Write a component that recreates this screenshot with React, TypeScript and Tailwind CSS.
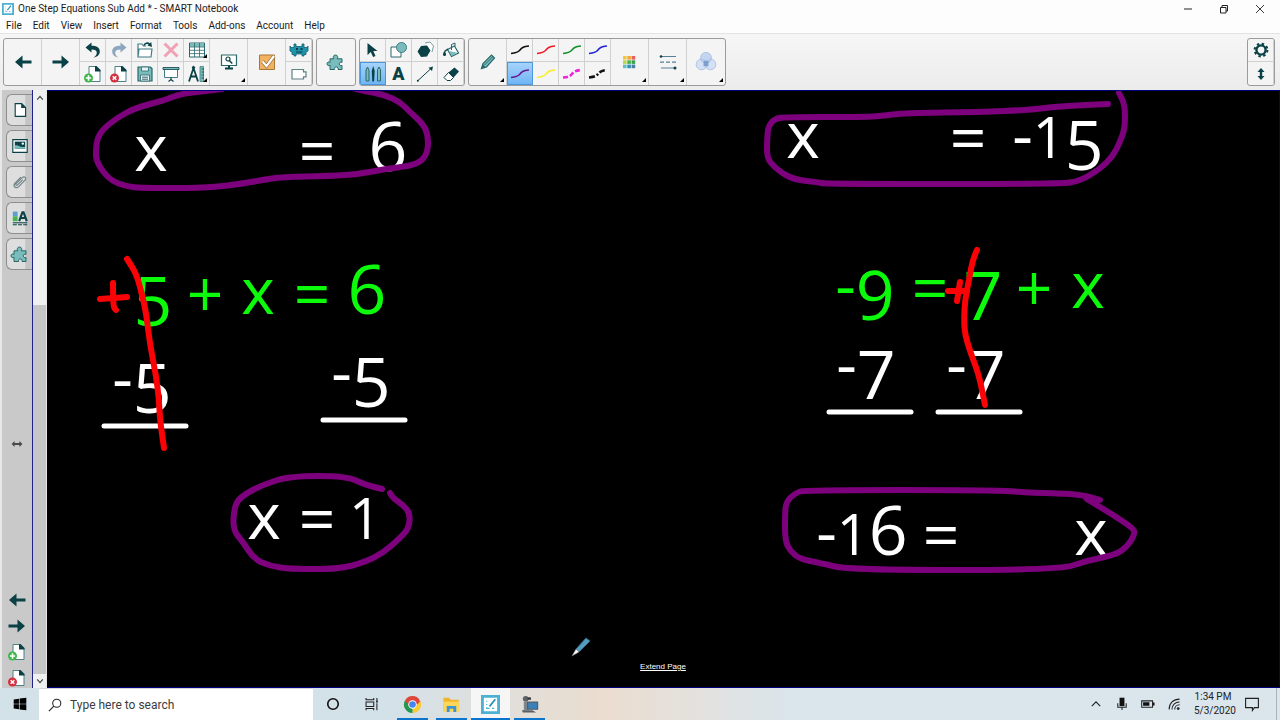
import type { ReactNode } from 'react';
import clsx from 'clsx';

type IconProps = { children: ReactNode; className?: string };

function Icon({ children, className }: IconProps) {
  return (
    <svg
      viewBox="0 0 20 20"
      fill="none"
      aria-hidden="true"
      className={clsx('shrink-0', className ?? 'h-5 w-5')}
    >
      {children}
    </svg>
  );
}

const DARK = '#0a4146';
const TEAL = '#79bcbb';

/* ---------- shared icons ---------- */

const ArrowLeft = ({ className }: { className?: string }) => (
  <Icon className={className}>
    <path d="M2 10 9.500 3.500v4.900h9v3.200h-9v4.900z" fill={DARK} />
  </Icon>
);

const ArrowRight = ({ className }: { className?: string }) => (
  <Icon className={className}>
    <path d="M18 10 10.500 3.500v4.900h-9v3.200h9v4.900z" fill={DARK} />
  </Icon>
);

const Puzzle = () => (
  <Icon>
    <path
      d="M4 17.500v-4.300c-1 .8-3 .5-3-1.400s2-2.300 3-1.400V6.800h3.800c-1-1.300-.6-3.800 1.700-3.800s2.700 2.500 1.700 3.800H16v3.600c-1.400-.8-2.700 0-2.700 1.500s1.500 2.200 2.700 1.500v4.100h-4c.5-1.500-.4-2.500-1.700-2.500s-2.200 1-1.600 2.500z"
      fill={TEAL}
      stroke="#28686b"
      strokeWidth="1"
    />
  </Icon>
);

const PageAdd = () => (
  <Icon>
    <path d="M6 2.500h7l4 4v11H6z" fill="#fff" stroke="#4c8185" />
    <path d="M12 2h1.500L17.500 6v1.500H12z" fill={DARK} />
    <circle cx="5.500" cy="14" r="4.500" fill="#3fb54a" />
    <path d="M5.500 11.300v5.400M2.800 14h5.400" stroke="#fff" strokeWidth="1.600" />
  </Icon>
);

const PageDelete = () => (
  <Icon>
    <path d="M6 2.500h7l4 4v11H6z" fill="#fff" stroke="#4c8185" />
    <path d="M12 2h1.500L17.500 6v1.500H12z" fill={DARK} />
    <circle cx="5.500" cy="14" r="4.500" fill="#d3313f" />
    <path d="m3.700 12.200 3.600 3.600m0-3.600-3.600 3.600" stroke="#fff" strokeWidth="1.500" />
  </Icon>
);

/* ---------- toolbar icons ---------- */

const Undo = () => (
  <Icon>
    <path d="M2.500 7.500 8.500 2.500v3.300c5 0 8.300 1.700 8.300 5.700 0 3-2.300 5.500-6.300 6.200 2.300-1.500 3.300-3.200 3.300-5 0-2-2-3.200-5.300-3.200v3z" fill={DARK} />
  </Icon>
);

const Redo = () => (
  <Icon>
    <path d="M17.500 7.500 11.500 2.500v3.300c-5 0-8.300 1.700-8.300 5.700 0 3 2.300 5.500 6.300 6.200-2.300-1.500-3.300-3.200-3.300-5 0-2 2-3.200 5.300-3.200v3z" fill="#8ba6bd" />
  </Icon>
);

const OpenFile = () => (
  <Icon>
    <path d="M3 17V4h4l1.500 2H11M14 17H3l1-8h13l-1 8z" fill="#fff" stroke="#417d82" strokeWidth="1.200" />
    <path d="M9 5.500c1-2.500 3.500-3 5.500-1.500" stroke={DARK} strokeWidth="1.600" />
    <path d="M12.500 5.500 17 7l-.8-5z" fill={DARK} />
  </Icon>
);

const Save = () => (
  <Icon>
    <path d="M3 3h12.500L17 4.500V17H3z" fill={TEAL} stroke="#28686b" strokeWidth="1.200" />
    <path d="M6.500 3h7v4h-7zM5.500 11h9v6h-9z" fill="#e9f2f2" stroke="#28686b" strokeWidth=".8" />
    <path d="M7 13.200h6M7 15.200h6" stroke={DARK} strokeWidth=".8" />
  </Icon>
);

const Cross = () => (
  <Icon>
    <path d="m3.500 3.500 13 13m0-13-13 13" stroke="#efa2b4" strokeWidth="3" />
  </Icon>
);

const Screen = () => (
  <Icon>
    <path d="M3.500 5v8.500h13V5" fill="#fff" stroke="#417d82" />
    <path d="M2 3.500h16v2H2z" fill={TEAL} stroke={DARK} strokeWidth=".8" />
    <path d="M10 13.500v2.500m-2.500 1.500L10 15.500l2.500 2" stroke={DARK} strokeWidth="1.200" />
  </Icon>
);

const TableIcon = () => (
  <Icon>
    <path d="M2.500 3h15v14h-15z" fill="#fff" stroke="#28686b" />
    <path d="M3 3.500h14v3.200H3z" fill={TEAL} />
    <path d="M2.500 7h15M2.500 10.300h15M2.500 13.600h15M7.500 3v14M12.500 3v14" stroke="#28686b" strokeWidth=".8" />
  </Icon>
);

const Measure = () => (
  <Icon>
    <path d="M2 17.500 6.500 4 11 17.500M3.800 12.500h5.400" stroke={DARK} strokeWidth="1.800" />
    <circle cx="6.500" cy="3.500" r="1.600" fill={DARK} />
    <path d="M13 2.500h3.500v15H13z" fill={TEAL} stroke="#417d82" strokeWidth=".8" />
    <path d="M14.500 5H17m-2.500 3H17m-2.500 3H17m-2.500 3H17" stroke={DARK} strokeWidth=".8" />
  </Icon>
);

const Monitor = () => (
  <Icon>
    <path d="M2.500 3h15v10.500h-15z" fill="#fff" stroke="#28686b" strokeWidth="1.200" />
    <circle cx="9" cy="7" r="2" stroke={DARK} strokeWidth="1.200" />
    <path d="m10.500 8.700 2.800 2.800" stroke={DARK} strokeWidth="1.500" />
    <path d="M6 16.500h8M10 13.500v3" stroke={DARK} strokeWidth="2" />
  </Icon>
);

const Response = () => (
  <Icon>
    <path d="M2.500 3h15v14.500h-15z" fill="#f1b362" stroke="#ab7735" />
    <path d="m5.500 9.500 4 4.500L17 4" stroke="#8b673b" strokeWidth="3.600" />
    <path d="m5.500 9.500 4 4.500L17 4" stroke="#fff" strokeWidth="2.200" />
  </Icon>
);

const Monster = () => (
  <Icon>
    <path d="M5 4h2v2.500h6V4h2v3.500h3l1-1.500v5l-2 1v2.500h-2V16h-2v-2H7v2H5v-1.500H3V12l-2-1V6l1 1.500h3z" fill="#1e94ab" stroke="#116070" strokeWidth=".8" />
    <path d="M7 8h2v2H7zm4.500 0h2v2h-2z" fill="#0b3e4d" />
    <path d="M7 12h6.500" stroke="#0b3e4d" />
  </Icon>
);

const Camera = () => (
  <Icon>
    <path d="M3 5.500h11.500v2.300H17v5h-2.500V15H3z" fill="#fff" stroke="#5b8285" strokeWidth="1.200" />
  </Icon>
);

const Pointer = () => (
  <Icon>
    <path d="M4.500 3v12l3.300-3 2.300 5 2.400-1-2.200-5h4.200z" fill={DARK} />
  </Icon>
);

const Shapes = () => (
  <Icon>
    <path d="M2 7h10v10H2z" fill="#fff" stroke="#28686b" />
    <circle cx="12.500" cy="7.500" r="5" fill={TEAL} stroke="#417d82" />
  </Icon>
);

const Polygon = () => (
  <Icon>
    <path d="m10 3 5-1 3.500 4-1.500 6" stroke="#7c999b" fill="#fff" />
    <path d="m6 6 6-.5 3.500 5L12 16.500l-6 .5-3.500-5.500z" fill={DARK} />
  </Icon>
);

const Fill = () => (
  <Icon>
    <path d="m6.500 9.500 7-3.500 4 7-7 3.500z" fill="#fff" stroke="#28686b" strokeWidth="1.200" />
    <path d="m8 11 8.500 1.700-6 3z" fill={TEAL} />
    <path d="M10.500 10V4.500L14 3v3" stroke="#28686b" />
    <path d="M3.500 11c2 2.500 2 5 0 5s-2-2.500 0-5z" fill={DARK} />
    <path d="M7 9 3.500 11.500" stroke={DARK} strokeWidth="1.500" />
  </Icon>
);

const Pens = () => (
  <Icon>
    <path d="M3 6 4.500 3 6 6v11H3zM14.500 5.500 16 3l1.500 2.500V17h-3z" fill={TEAL} stroke="#28686b" />
    <path d="m10.200 2 1.500 5-.7 10.500H9.300L8.700 7z" fill={DARK} />
  </Icon>
);

const LineTool = () => (
  <Icon>
    <path d="M2.500 17 16 4.500" stroke={DARK} />
    <path d="m18 2.500-1 4.500-3.500-3.300z" fill={DARK} />
    <circle cx="2.800" cy="16.800" r="1" fill={DARK} />
  </Icon>
);

const Eraser = () => (
  <Icon>
    <path d="m7.500 8.500 6-5 4.500 4-5.500 6z" fill={DARK} />
    <path d="m7.500 8.500 5 5-3 3H6L3 13.500z" fill="#fff" stroke={DARK} />
  </Icon>
);

const Pencil = () => (
  <Icon>
    <path d="m3.500 16.500 1.500-5 8.500-8.500 3 3L8.500 15z" fill={TEAL} stroke="#28686b" strokeWidth="1.200" />
    <path d="m3.500 16.500 1.200-4.200 3 3z" fill="#28686b" />
    <path d="m6.500 13 8.500-8.500" stroke="#28686b" />
  </Icon>
);

const ColorGrid = () => {
  const colors = [
    '#f4c53d', '#f0a73c', '#e9605f',
    '#b8d84c', '#48b05a', '#3f9f4e',
    '#63bfc4', '#358dbb', '#4d7f9e',
  ];
  return (
    <Icon>
      {colors.map((c, i) => (
        <rect key={c} x={3 + (i % 3) * 4.3} y={4 + Math.floor(i / 3) * 4.3} width="3.600" height="3.600" fill={c} />
      ))}
    </Icon>
  );
};

const LineProps = () => (
  <Icon>
    <path d="M3 4.500h15M3 16h14" stroke="#587f98" strokeWidth="1.200" />
    <path d="M2 10.200h17" stroke="#587f98" strokeDasharray="4 2" strokeWidth="1.200" />
    <circle cx="3" cy="4.500" r="1.300" fill={DARK} />
    <circle cx="17" cy="16" r="1.500" fill={DARK} />
  </Icon>
);

const Transparency = () => (
  <Icon className="h-6 w-6">
    <g stroke="#9db5dc" strokeWidth=".6" fillOpacity=".75">
      <circle cx="6.300" cy="12" r="4.500" fill="#c9daf4" />
      <circle cx="13.700" cy="12" r="4.500" fill="#c9daf4" />
      <circle cx="10" cy="6.500" r="4.500" fill="#b4cbee" />
    </g>
    <path d="M8 9h4v4.500H8z" fill="#7f9ed0" />
  </Icon>
);

const Gear = () => (
  <Icon>
    <circle cx="10" cy="10" r="4.600" stroke={DARK} strokeWidth="2.400" />
    <circle cx="10" cy="10" r="6.400" stroke={DARK} strokeWidth="2" strokeDasharray="2.400 2.626" />
  </Icon>
);

const UpDown = () => (
  <Icon>
    <path d="m10 4 3.500 4h-2.300v4h2.300L10 16l-3.500-4h2.300V8H6.500z" fill={DARK} />
  </Icon>
);

const InkLine = ({ color, dash }: { color: string; dash?: string }) => (
  <svg viewBox="0 0 20 12" fill="none" aria-hidden="true" className="h-3 w-5">
    <path
      d="M1 9.500c4-.5 6.500-.8 8.500-3C11.500 4 13 2.500 19 2"
      stroke={color}
      strokeWidth={dash ? 2.600 : 1.600}
      strokeDasharray={dash}
    />
  </svg>
);

/* ---------- toolbar ---------- */

function ToolButton({
  label,
  children,
  wide,
  menu,
  active,
}: {
  label: string;
  children: ReactNode;
  wide?: boolean;
  menu?: boolean;
  active?: boolean;
}) {
  return (
    <button
      type="button"
      aria-label={label}
      className={clsx(
        'relative flex items-center justify-center border-r border-[#d0d0d0]',
        wide ? 'h-[46px] w-[38px]' : 'h-[23px] w-[26px] odd:border-b',
        active && 'bg-linear-to-b from-[#a8d4fb] to-[#6cb4f4] outline outline-[#4b97db] -outline-offset-1'
      )}
    >
      {children}
      {menu && (
        <span className="absolute right-[2px] bottom-[3px] border-b-4 border-l-4 border-b-black border-l-transparent" />
      )}
    </button>
  );
}

function ToolGroup({ children }: { children: ReactNode }) {
  return (
    <div className="flex overflow-hidden rounded-[3px] border border-[#9b9b9b] bg-[#f4f4f4] *:last:border-r-0">
      {children}
    </div>
  );
}

function Pair({ children }: { children: ReactNode }) {
  return <div className="flex flex-col">{children}</div>;
}

function Toolbar() {
  return (
    <div className="flex items-start justify-between border-t border-[#e3e3e3] bg-linear-to-b from-[#f6f6f6] to-[#ececec] pt-1 pr-[5px] pb-1 pl-[3px]">
      <div className="flex gap-[3px]">
        <ToolGroup>
          <ToolButton label="Previous page" wide><ArrowLeft /></ToolButton>
          <ToolButton label="Next page" wide><ArrowRight /></ToolButton>
          <Pair>
            <ToolButton label="Undo"><Undo /></ToolButton>
            <ToolButton label="Add page"><PageAdd /></ToolButton>
          </Pair>
          <Pair>
            <ToolButton label="Redo"><Redo /></ToolButton>
            <ToolButton label="Delete page"><PageDelete /></ToolButton>
          </Pair>
          <Pair>
            <ToolButton label="Open"><OpenFile /></ToolButton>
            <ToolButton label="Save"><Save /></ToolButton>
          </Pair>
          <Pair>
            <ToolButton label="Delete"><Cross /></ToolButton>
            <ToolButton label="Screen shade"><Screen /></ToolButton>
          </Pair>
          <Pair>
            <ToolButton label="Table" menu><TableIcon /></ToolButton>
            <ToolButton label="Measurement tools" menu><Measure /></ToolButton>
          </Pair>
          <ToolButton label="View screens" wide menu><Monitor /></ToolButton>
          <ToolButton label="Response" wide><Response /></ToolButton>
          <Pair>
            <ToolButton label="Activity builder"><Monster /></ToolButton>
            <ToolButton label="Document camera"><Camera /></ToolButton>
          </Pair>
        </ToolGroup>

        <ToolGroup>
          <ToolButton label="Add-ons" wide><Puzzle /></ToolButton>
        </ToolGroup>

        <ToolGroup>
          <Pair>
            <ToolButton label="Select"><Pointer /></ToolButton>
            <ToolButton label="Pens" active><Pens /></ToolButton>
          </Pair>
          <Pair>
            <ToolButton label="Shapes"><Shapes /></ToolButton>
            <ToolButton label="Text">
              <span className="text-lg leading-none font-black text-[#0a4146]">A</span>
            </ToolButton>
          </Pair>
          <Pair>
            <ToolButton label="Polygons"><Polygon /></ToolButton>
            <ToolButton label="Lines"><LineTool /></ToolButton>
          </Pair>
          <Pair>
            <ToolButton label="Fill"><Fill /></ToolButton>
            <ToolButton label="Eraser"><Eraser /></ToolButton>
          </Pair>
        </ToolGroup>

        <ToolGroup>
          <ToolButton label="Pen type" wide menu><Pencil /></ToolButton>
          <Pair>
            <ToolButton label="Black pen"><InkLine color="#111" /></ToolButton>
            <ToolButton label="Purple pen" active><InkLine color="#6b1a8f" /></ToolButton>
          </Pair>
          <Pair>
            <ToolButton label="Red pen"><InkLine color="#ee1c24" /></ToolButton>
            <ToolButton label="Yellow highlighter"><InkLine color="#f6ee2c" /></ToolButton>
          </Pair>
          <Pair>
            <ToolButton label="Green pen"><InkLine color="#15912b" /></ToolButton>
            <ToolButton label="Magenta dashes"><InkLine color="#f01fe0" dash="5 2" /></ToolButton>
          </Pair>
          <Pair>
            <ToolButton label="Blue pen"><InkLine color="#2222dd" /></ToolButton>
            <ToolButton label="Black dashes"><InkLine color="#111" dash="6 2 2 2" /></ToolButton>
          </Pair>
          <ToolButton label="Color" wide menu><ColorGrid /></ToolButton>
          <ToolButton label="Line properties" wide menu><LineProps /></ToolButton>
          <ToolButton label="Transparency" wide menu><Transparency /></ToolButton>
        </ToolGroup>
      </div>

      <ToolGroup>
        <Pair>
          <ToolButton label="Customize toolbar"><Gear /></ToolButton>
          <ToolButton label="Move toolbar"><UpDown /></ToolButton>
        </Pair>
      </ToolGroup>
    </div>
  );
}

/* ---------- header ---------- */

const menus = ['File', 'Edit', 'View', 'Insert', 'Format', 'Tools', 'Add-ons', 'Account', 'Help'];

const NotebookLogo = ({ className }: { className?: string }) => (
  <Icon className={className}>
    <path d="M1.500 1.500h17v17h-17z" fill="#fff" stroke="#4db1d3" strokeWidth="3" />
    <path d="M6 6v1m0 2.500v1M6 13v1h3m2.500 0H14" stroke="#4db1d3" strokeWidth="1.300" />
    <path d="M15 4.500 9 12" stroke="#2e94bb" strokeWidth="2" />
  </Icon>
);

function Header() {
  return (
    <header className="bg-[#fdfdfd]">
      <div className="flex h-[18px] items-center justify-between pr-[15px] pl-[2px]">
        <div className="flex items-center gap-1">
          <NotebookLogo className="h-3 w-3" />
          <h1 className="text-[10px] leading-4">One Step Equations Sub Add * - SMART Notebook</h1>
        </div>
        <div className="flex gap-[26px]">
          <button type="button" aria-label="Minimize">
            <Icon className="h-[10px] w-[10px]"><path d="M2 10h16" stroke="#222" strokeWidth="2" /></Icon>
          </button>
          <button type="button" aria-label="Restore">
            <Icon className="h-[10px] w-[10px]">
              <path d="M3 7h11v11H3zM6 7V3h11v11h-3" stroke="#222" strokeWidth="2" />
            </Icon>
          </button>
          <button type="button" aria-label="Close">
            <Icon className="h-[10px] w-[10px]"><path d="m2 2 16 16m0-16L2 18" stroke="#222" strokeWidth="1.800" /></Icon>
          </button>
        </div>
      </div>
      <nav className="flex h-[15px] items-center gap-[11px] pl-[6px] text-[10px] leading-4">
        {menus.map((m) => (
          <button key={m} type="button">{m}</button>
        ))}
      </nav>
    </header>
  );
}

/* ---------- side panel ---------- */

function SideTab({ label, children }: { label: string; children: ReactNode }) {
  return (
    <button
      type="button"
      aria-label={label}
      className="flex h-8 w-[26px] items-center justify-center rounded-l-md border border-r-0 border-[#8e8e8e] bg-linear-to-r from-[#dedede] from-70% to-[#c4c4c4] to-75%"
    >
      {children}
    </button>
  );
}

function SidePanel() {
  return (
    <aside className="flex w-8 flex-col items-end border-l-2 border-[#e8e8e8] bg-[#c9c9c9] pt-1">
      <div className="flex flex-col gap-1">
        <SideTab label="Page sorter">
          <Icon className="h-4 w-4">
            <path d="M4 2h8l5 5v11H4z" fill="#fff" stroke={DARK} strokeWidth="1.400" />
            <path d="M11.500 2v5.500H17z" fill={DARK} />
          </Icon>
        </SideTab>
        <SideTab label="Gallery">
          <Icon className="h-4 w-4">
            <path d="M1 2h18v16H1z" fill="#fff" stroke={DARK} strokeWidth="1.400" />
            <path d="M3.500 4.500h13v9h-13z" fill={DARK} />
            <path d="M3.500 9.500c4-2 6 3 13 1.500v2.500h-13z" fill={TEAL} />
            <circle cx="13.500" cy="7" r="1.500" fill="#fff" />
          </Icon>
        </SideTab>
        <SideTab label="Attachments">
          <Icon className="h-4 w-4">
            <path
              d="M13.500 7 7 13.500c-1.500 1.500-3-.3-1.800-1.500l7.600-7.500c2.700-2.500 6 .5 3.500 3.200L8.500 15.800c-3.500 3.300-8-.8-4.700-4.500L11 4"
              stroke="#718589"
              strokeWidth="1.500"
            />
          </Icon>
        </SideTab>
        <SideTab label="Properties">
          <Icon className="h-4 w-4">
            <path d="M1 2h6v6H1z" fill="#5b9fd0" />
            <path d="M1 8h6v6H1z" fill="#47b648" />
            <path d="m9 14 4-11h1.500l4 11m-8-4h6" stroke={DARK} strokeWidth="2.600" />
            <path d="M1 16h18" stroke={DARK} strokeWidth="1.300" />
            <path d="M1 18.500h18" stroke={DARK} strokeWidth="1.300" strokeDasharray="5 1.500" />
          </Icon>
        </SideTab>
        <SideTab label="Add-ons"><Puzzle /></SideTab>
      </div>

      <div className="flex w-full flex-1 items-center justify-center pt-7">
        <button type="button" aria-label="Resize panel">
          <Icon className="h-3 w-3">
            <path d="m1 10 5-5v3.500h8V5l5 5-5 5v-3.500H6V15z" fill="#484848" />
          </Icon>
        </button>
      </div>

      <div className="flex w-full flex-col items-center gap-[6px]">
        <button type="button" aria-label="Previous page"><ArrowLeft /></button>
        <button type="button" aria-label="Next page"><ArrowRight /></button>
        <button type="button" aria-label="Add page"><PageAdd /></button>
        <button type="button" aria-label="Delete page"><PageDelete /></button>
      </div>
    </aside>
  );
}

function ScrollBar() {
  return (
    <div className="flex w-[14px] flex-col border-r border-[#e6e6e6] bg-[#f0f0f0]">
      <button type="button" aria-label="Scroll up" className="flex h-4 items-center justify-center">
        <Icon className="h-2 w-2"><path d="m3 14 7-8 7 8" stroke="#444" strokeWidth="3" /></Icon>
      </button>
      <div className="flex flex-1 flex-col justify-end">
        <div className="h-[65%] bg-[#c6c6c6]" />
      </div>
      <button type="button" aria-label="Scroll down" className="flex h-[14px] items-center justify-center">
        <Icon className="h-2 w-2"><path d="m3 6 7 8 7-8" stroke="#444" strokeWidth="3" /></Icon>
      </button>
    </div>
  );
}

/* ---------- whiteboard ---------- */

type Term = [text: string, x: number, y: number];

const greenText: Term[] = [
  ['5', 153, 314], ['+', 205, 314], ['x', 258, 314], ['=', 312, 314], ['6', 367, 314],
  ['-9', 865, 308], ['=', 930, 308], ['7', 983, 308], ['+', 1034, 308], ['x', 1088, 308],
];

const whiteText: Term[] = [
  ['x', 151, 171], ['=', 317, 171], ['6', 388, 171],
  ['x', 803, 158], ['=', 968, 158], ['-15', 1058, 158],
  ['-5', 142, 401], ['-5', 361, 395],
  ['-7', 866, 387], ['-7', 976, 387],
  ['x', 264, 539], ['=', 317, 539], ['1', 365, 539],
  ['-16', 862, 555], ['=', 941, 555], ['x', 1091, 555],
];

type Stroke = { color: string; points: number[] };

const PURPLE = '#7d007d';
const RED = '#fb0207';

const strokes: Stroke[] = [
  { color: PURPLE, points: [222, 89, 205, 91, 180, 94, 165, 100, 150, 104, 133, 109, 117, 118, 103, 129, 97, 139, 96, 150, 96, 160, 103, 172, 112, 181, 125, 186, 140, 188, 190, 188, 215, 187, 240, 184, 262, 180, 282, 177, 330, 176, 360, 174, 385, 169, 410, 166, 422, 161, 428, 151, 428, 135, 423, 124, 410, 112, 400, 102, 385, 95, 365, 91, 352, 88] },
  { color: PURPLE, points: [1108, 104, 1060, 106, 1030, 110, 980, 112, 905, 113, 880, 116, 865, 117, 785, 117, 774, 119, 768, 127, 767, 142, 767, 158, 775, 168, 790, 178, 805, 181, 817, 182, 825, 184, 1060, 184, 1080, 181, 1100, 169, 1113, 156, 1120, 142, 1125, 128, 1125, 105, 1119, 93] },
  { color: PURPLE, points: [382, 489, 365, 485, 347, 476, 290, 476, 262, 485, 240, 497, 234, 508, 233, 530, 243, 542, 254, 559, 270, 566, 290, 569, 340, 569, 365, 562, 383, 553, 400, 538, 409, 528, 410, 513, 403, 505, 393, 498, 390, 493] },
  { color: PURPLE, points: [1100, 500, 1085, 494, 1030, 493, 1000, 490, 805, 490, 795, 493, 786, 502, 785, 515, 785, 540, 790, 551, 800, 559, 820, 563, 850, 570, 1060, 570, 1085, 561, 1115, 555, 1127, 547, 1135, 534, 1133, 528, 1110, 513, 1090, 501, 1084, 497, 1100, 500] },
  { color: RED, points: [127, 259, 133, 268, 138, 279, 142, 295, 146, 312, 150, 345, 156, 375, 159, 400, 160, 420, 164, 448] },
  { color: RED, points: [100, 299, 127, 297] },
  { color: RED, points: [113, 283, 113, 300, 114, 308, 116, 310] },
  { color: RED, points: [977, 250, 973, 258, 969, 280, 965, 300, 964, 320, 965, 335, 971, 354, 979, 375, 985, 405] },
  { color: RED, points: [948, 291, 967, 291] },
  { color: RED, points: [960, 282, 957, 301] },
];

const underlines = [
  [104, 426], [323, 420], [829, 412], [938, 412],
];

// quadratic curves through the midpoints keep the ink rounded
function inkPath(p: number[]) {
  let d = `M${p[0]} ${p[1]}`;
  for (let i = 2; i < p.length - 2; i += 2) {
    d += `Q${p[i]} ${p[i + 1]} ${(p[i] + p[i + 2]) / 2} ${(p[i + 1] + p[i + 3]) / 2}`;
  }
  return `${d}L${p[p.length - 2]} ${p[p.length - 1]}`;
}

// old-style figures: 1 is short, 5 7 9 hang below the baseline
function figure(ch: string) {
  if (ch === '1') return { size: 'text-[56px]', drop: 0 };
  if (/[579]/.test(ch)) return { size: 'text-[68px]', drop: 12 };
  if (ch === '6') return { size: 'text-[68px]', drop: 0 };
  if (/[+=]/.test(ch)) return { size: 'text-[64px]', drop: 3 };
  return { size: 'text-[64px]', drop: 0 };
}

function BoardText({ items, className }: { items: Term[]; className: string }) {
  return (
    <g textAnchor="middle" className={className}>
      {items.map(([text, x, y]) => (
        <text key={`${x}-${y}`} x={x} y={y}>
          {[...text].map((ch, i) => (
            <tspan
              key={i}
              dy={figure(ch).drop - (i > 0 ? figure(text[i - 1]).drop : 0)}
              className={figure(ch).size}
            >
              {ch}
            </tspan>
          ))}
        </text>
      ))}
    </g>
  );
}

function Board() {
  return (
    <main className="relative min-w-0 flex-1 overflow-hidden border-y border-r border-[#00007a] bg-black">
      <svg
        viewBox="47 91 1232 596"
        preserveAspectRatio="xMidYMid meet"
        className="absolute inset-0 h-full w-full font-['Open_Sans',sans-serif] font-medium"
      >
        <BoardText items={greenText} className="fill-[#0bfb0b]" />
        <BoardText items={whiteText} className="fill-white" />
        {underlines.map(([x, y]) => (
          <path key={x} d={`M${x} ${y}h82`} stroke="#fff" strokeWidth="5" strokeLinecap="round" />
        ))}
        {strokes.map((s, i) => (
          <path
            key={i}
            d={inkPath(s.points)}
            fill="none"
            stroke={s.color}
            strokeWidth="6"
            strokeLinecap="round"
            strokeLinejoin="round"
          />
        ))}
        {/* pen cursor */}
        <path d="m576 649 10-11 4 3-11 11z" fill="#549bbd" stroke="#2b6584" />
        <path d="m572 656 4-7 3 3z" fill="#fff" stroke="#777" strokeWidth=".6" />
      </svg>
      <a
        href="#extend"
        className="absolute bottom-3 left-1/2 -translate-x-1/2 font-['Liberation_Sans',sans-serif] text-[8px] leading-4 text-white underline"
      >
        Extend Page
      </a>
    </main>
  );
}

/* ---------- taskbar ---------- */

function TaskApp({
  label,
  children,
  running,
  active,
}: {
  label: string;
  children: ReactNode;
  running?: boolean;
  active?: boolean;
}) {
  return (
    <button
      type="button"
      aria-label={label}
      className={clsx('relative flex w-[39px] items-center justify-center', active && 'bg-white/70')}
    >
      {children}
      {running && (
        <span className={clsx('absolute bottom-0 h-[2px] bg-[#0a74cf]', active ? 'inset-x-0' : 'inset-x-1')} />
      )}
    </button>
  );
}

function Taskbar() {
  return (
    <footer className="flex h-8 items-stretch justify-between bg-linear-to-r from-[#d3e1e9] from-30% via-[#ebddcf] via-47% to-[#dae5ec] to-62%">
      <div className="flex">
        <button type="button" aria-label="Start" className="flex w-[39px] items-center justify-center">
          <Icon className="h-[14px] w-[14px]">
            <path d="M1 3.500 8.500 2.500v7H1zM9.500 2.300 19 1v8.500H9.500zM1 10.500h7.500v7L1 16.500zm8.500 0H19V19l-9.500-1.300z" fill="#000" />
          </Icon>
        </button>
        <label className="flex w-[274px] items-center gap-2 border-t border-[#d6d6d6] bg-white pl-[9px]">
          <Icon className="h-[14px] w-[14px]">
            <circle cx="12.500" cy="7.500" r="5.800" stroke="#222" strokeWidth="1.500" />
            <path d="m8.300 11.700-7 7" stroke="#222" strokeWidth="1.600" />
          </Icon>
          <input
            type="text"
            aria-label="Type here to search"
            placeholder="Type here to search"
            className="min-w-0 flex-1 bg-transparent text-[12px] leading-4 outline-none placeholder:text-[#3c3c3c]"
          />
        </label>
        <TaskApp label="Cortana">
          <Icon className="h-[14px] w-[14px]"><circle cx="10" cy="10" r="7.500" stroke="#111" strokeWidth="2.300" /></Icon>
        </TaskApp>
        <TaskApp label="Task view">
          <Icon className="h-[14px] w-[14px]">
            <path d="M1.500 1.500V4h11V1.500M1.500 7h11v6.500h-11zM1.500 19v-2.500h11V19M17 1.500V5M17 9v10" stroke="#222" strokeWidth="1.500" />
            <path d="M15.800 5h2.600v3h-2.600z" fill="#222" />
          </Icon>
        </TaskApp>
        <div className="ml-[2px] flex">
          <TaskApp label="Chrome" running>
            <Icon className="h-[19px] w-[19px]">
              <path d="M10 10 2.200 5.500A9 9 0 0 1 17.800 5.500z" fill="#dd4639" />
              <path d="M10 10 17.800 5.500A9 9 0 0 1 10 19z" fill="#fbcb30" />
              <path d="M10 10v9A9 9 0 0 1 2.200 5.500z" fill="#26974e" />
              <path d="M10 6h7.900l.3.500L14 11zM6.500 12 2.200 5.500 8 8z" fill="#dd4639" />
              <circle cx="10" cy="10" r="4.500" fill="#fff" />
              <circle cx="10" cy="10" r="3.500" fill="#4485ee" />
            </Icon>
          </TaskApp>
          <TaskApp label="File explorer" running>
            <Icon className="h-[19px] w-[19px]">
              <path d="M1.500 3h6l1.500 2h8.500v12h-16z" fill="#f1b529" />
              <path d="M1.500 7h17v10.500h-17z" fill="#fcd75c" />
              <path d="M5 18v-6.500h10V18h-3v-3.500H8V18z" fill="#3c94d3" />
            </Icon>
          </TaskApp>
          <TaskApp label="SMART Notebook" running active>
            <NotebookLogo className="h-[19px] w-[19px]" />
          </TaskApp>
          <TaskApp label="Recorder" running>
            <Icon className="h-[19px] w-[19px]">
              <circle cx="6" cy="4" r="3" fill="#5c6367" />
              <path d="M4 7h4l1 9H4z" fill="#7c868b" />
              <path d="M2 16h11l4 2.500H3z" fill="#595f63" />
              <path d="M8 7.500h10.500V15H8z" fill="#3a81b9" stroke="#535f68" strokeWidth="1.300" />
              <path d="M8 2.500h3.500V5H8z" fill="#333" />
            </Icon>
          </TaskApp>
        </div>
      </div>

      <div className="flex items-center">
        <div className="flex items-center gap-3 pr-[13px]">
          <button type="button" aria-label="Show hidden icons">
            <Icon className="h-[14px] w-[14px]"><path d="m4 13 6-6 6 6" stroke="#222" strokeWidth="1.600" /></Icon>
          </button>
          <Icon className="h-[14px] w-[14px]">
            <path d="M6.500 1h7v12h-7z" fill="#111" />
            <path d="M4 9v5.500h12V9M10 15v3.500" stroke="#222" strokeWidth="1.500" />
          </Icon>
          <Icon className="h-[14px] w-[14px]">
            <path d="M1 5.500h15.500v9H1z" stroke="#222" strokeWidth="1.500" />
            <path d="M3 7.500h9v5H3zM17 8h2.300v4H17z" fill="#111" />
          </Icon>
          <Icon className="h-[14px] w-[14px]">
            <path d="M3 18C3 9 9 3 18 3M7 18c0-6.500 4.500-11 11-11M11 18c0-4 3-7 7-7" stroke="#222" strokeWidth="1.500" />
            <circle cx="16" cy="16.500" r="2" fill="#222" />
          </Icon>
        </div>
        <div className="w-[38px] text-center text-[10px] leading-[14px] whitespace-nowrap text-[#222]">
          <div>1:34 PM</div>
          <div>5/3/2020</div>
        </div>
        <button type="button" aria-label="Notifications" className="mr-4 ml-3">
          <Icon className="h-4 w-4">
            <path d="M2 3h16v11.500h-5L10.500 18v-3.500H2z" stroke="#222" strokeWidth="1.400" />
          </Icon>
        </button>
        <span className="h-full w-[4px] border-l border-[#a9b3b9]" />
      </div>
    </footer>
  );
}

export default function App() {
  return (
    <div className="flex h-screen flex-col overflow-hidden bg-[#f0f0f0] font-['Roboto',sans-serif] text-[#1b1b1b]">
      <Header />
      <Toolbar />
      <div className="flex min-h-0 flex-1">
        <SidePanel />
        <div className="w-px bg-[#20208a]" />
        <ScrollBar />
        <Board />
      </div>
      <Taskbar />
    </div>
  );
}
